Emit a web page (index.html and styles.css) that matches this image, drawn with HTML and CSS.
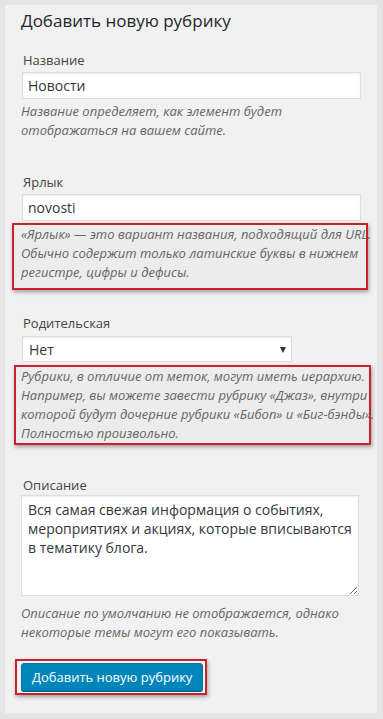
FILE: index.html
```html
<!DOCTYPE html>
<html lang="ru">
<head>
    <meta charset="UTF-8">
    <meta name="viewport" content="width=device-width, initial-scale=1.0">
    <title>Добавить новую рубрику</title>
    <link rel="stylesheet" href="styles.css">
</head>
<body>
    <div class="form-wrap">
        <h2>Добавить новую рубрику</h2>

        <div class="form-field field-name">
            <label for="tag-name">Название</label>
            <input type="text" id="tag-name" class="text-input" value="Новости">
            <p class="hint">Название определяет, как элемент будет<br>отображаться на вашем сайте.</p>
        </div>

        <div class="form-field field-slug">
            <label for="tag-slug">Ярлык</label>
            <input type="text" id="tag-slug" class="text-input" value="novosti">
            <div class="marked marked-slug">
                <p class="hint">«Ярлык» — это вариант названия, подходящий для URL.<br>Обычно содержит только латинские буквы в нижнем<br>регистре, цифры и дефисы.</p>
            </div>
        </div>

        <div class="form-field field-parent">
            <label for="parent">Родительская</label>
            <div class="select-wrap">
                <select id="parent" class="select-input">
                    <option>Нет</option>
                </select>
            </div>
            <div class="marked marked-parent">
                <p class="hint">Рубрики, в отличие от меток, могут иметь иерархию.<br>Например, вы можете завести рубрику «Джаз», внутри<br>которой будут дочерние рубрики «Бибоп» и «Биг-бэнды».<br>Полностью произвольно.</p>
            </div>
        </div>

        <div class="form-field field-description">
            <label for="tag-description">Описание</label>
            <textarea id="tag-description" class="text-area">Вся самая свежая информация о событиях, мероприятиях и акциях, которые вписываются в тематику блога.</textarea>
            <p class="hint">Описание по умолчанию не отображается, однако<br>некоторые темы могут его показывать.</p>
        </div>

        <div class="marked marked-submit">
            <button type="button" class="button-primary">Добавить новую рубрику</button>
        </div>
    </div>
</body>
</html>
```

FILE: styles.css
```css
body {
    margin: 0;
    padding: 5px 6px 6px 5px;
    background-color: #e5e5e5;
    font-family: "Open Sans", "Noto Sans", sans-serif;
    color: #444;
}

.form-wrap {
    width: 372px;
    box-sizing: border-box;
    padding: 3px 16px 18px 16px;
    background-color: #f1f1f1;
}

.form-wrap h2 {
    margin: 0;
    font-size: 17px;
    line-height: 26px;
    font-weight: 400;
    color: #23282d;
}

.form-field label {
    display: block;
    margin-left: 2px;
    font-size: 13px;
    line-height: 18px;
    color: #444;
}

.field-name { margin-top: 17px; }
.field-slug { margin-top: 33px; }
.field-parent { margin-top: 24px; }
.field-description { margin-top: 31px; }

.text-input,
.select-input,
.text-area {
    display: block;
    box-sizing: border-box;
    margin: 3px 0 0 1px;
    border: 1px solid #ddd;
    background-color: #fff;
    box-shadow: inset 0 1px 2px rgba(0, 0, 0, 0.07);
    font-family: "Open Sans", "Noto Sans", sans-serif;
    font-size: 14px;
    color: #32373c;
    outline: none;
}

.text-input {
    width: 339px;
    height: 27px;
    padding: 0 5px;
}

.select-wrap {
    position: relative;
    width: 270px;
    margin: 4px 0 0 1px;
}

.select-input {
    width: 270px;
    height: 26px;
    margin: 0;
    padding: 0 6px;
    -webkit-appearance: none;
    appearance: none;
    border-radius: 0;
}

.select-wrap::after {
    content: "";
    position: absolute;
    right: 6px;
    top: 11px;
    border-left: 3.5px solid transparent;
    border-right: 3.5px solid transparent;
    border-top: 6px solid #333;
}

.text-area {
    width: 338px;
    height: 101px;
    margin: 1px 0 0 0;
    padding: 4px 6px;
    line-height: 19px;
    resize: vertical;
}

.hint {
    margin: 3px 0 0 0;
    font-size: 13px;
    line-height: 19px;
    font-style: italic;
    color: #666;
    white-space: nowrap;
}

.field-description .hint {
    margin-top: 8px;
}

.marked {
    border: 2px solid #c8232b;
    box-shadow: 1px 2px 4px rgba(0, 0, 0, 0.35);
    background-color: #ececec;
}

.marked .hint {
    margin: 0;
}

.marked-slug {
    margin: 2px -7px 0 -9px;
    padding: 0 5px 6px 7px;
}

.marked-parent {
    margin: 3px -10px 0 -7px;
    padding: 0 5px 0 5px;
}

.marked-submit {
    display: inline-block;
    margin: 17px 0 0 -6px;
    padding: 2px 2px 2px 4px;
    background-color: transparent;
}

.button-primary {
    display: block;
    height: 28px;
    padding: 0 10px;
    background-color: #0085ba;
    border: 1px solid #0073aa;
    border-radius: 3px;
    box-shadow: 0 1px 0 #006799;
    color: #fff;
    font-family: "Open Sans", "Noto Sans", sans-serif;
    font-size: 13px;
    line-height: 26px;
    cursor: pointer;
}
```
